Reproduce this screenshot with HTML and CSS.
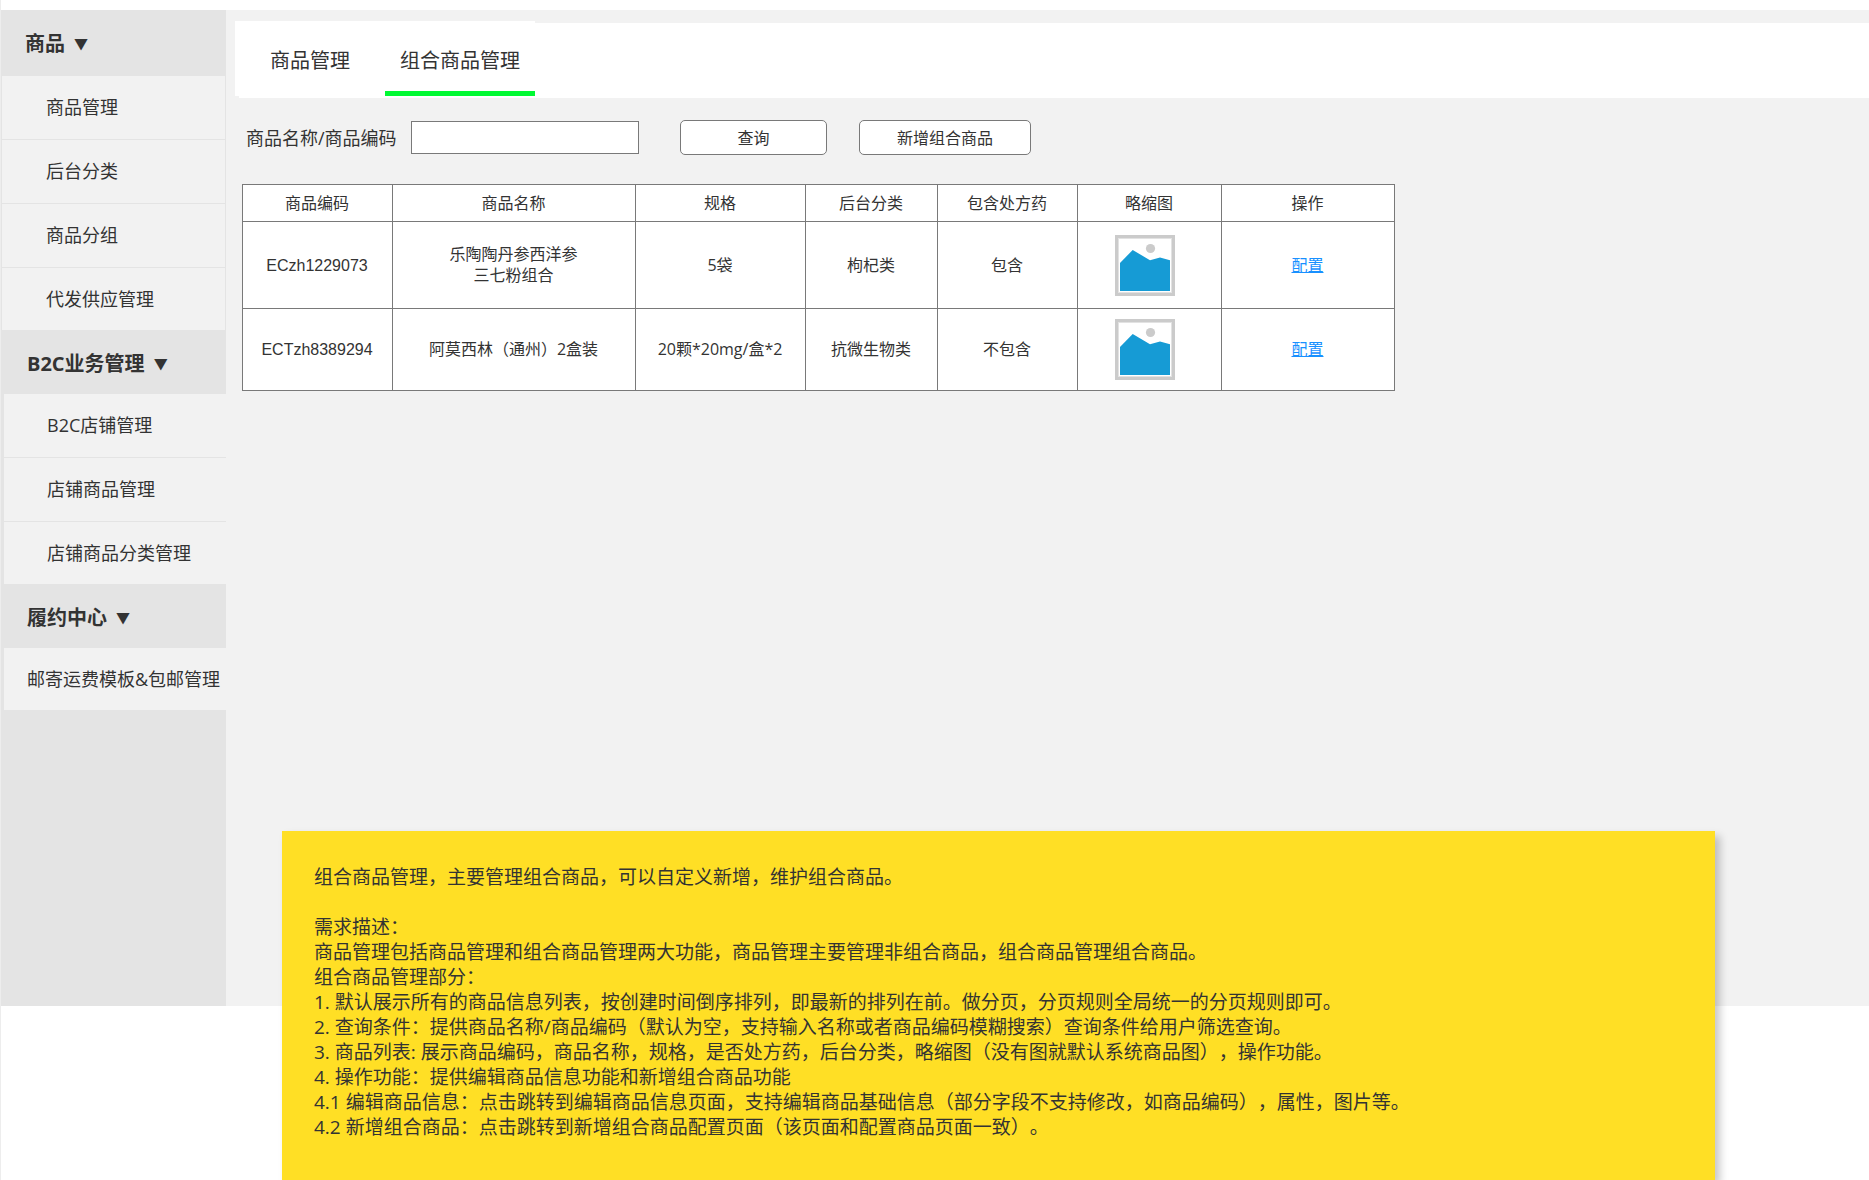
FILE: index.html
```html
<!DOCTYPE html>
<html lang="zh-CN">
<head>
<meta charset="utf-8">
<title>组合商品管理</title>
<link rel="stylesheet" href="styles.css">
</head>
<body>
<svg class="defs" width="0" height="0" aria-hidden="true">
  <symbol id="thumb" viewBox="0 0 60 61">
    <rect width="60" height="61" fill="#cbcbcb"/>
    <rect x="3" y="3" width="54" height="55" fill="#e2e2e2"/>
    <rect x="4" y="4" width="52" height="53" fill="#fff"/>
    <circle cx="35.5" cy="13.5" r="4.6" fill="#cbcbcb"/>
    <path d="M5 28L17.7 15L35 25.2L45 22.6L55 25.2V56H5Z" fill="#169bd5"/>
  </symbol>
</svg>
<div class="page">
  <div class="workspace">
    <nav class="sidebar" aria-label="主菜单">
      <section class="group group-first">
        <h2 class="group-title">商品 <span class="caret">▼</span></h2>
        <a class="item" href="#">商品管理</a>
        <a class="item" href="#">后台分类</a>
        <a class="item" href="#">商品分组</a>
        <a class="item" href="#">代发供应管理</a>
      </section>
      <section class="group">
        <h2 class="group-title">B2C业务管理 <span class="caret">▼</span></h2>
        <a class="item" href="#">B2C店铺管理</a>
        <a class="item" href="#">店铺商品管理</a>
        <a class="item" href="#">店铺商品分类管理</a>
      </section>
      <section class="group group-flush">
        <h2 class="group-title">履约中心 <span class="caret">▼</span></h2>
        <a class="item" href="#">邮寄运费模板&amp;包邮管理</a>
      </section>
    </nav>
    <main class="content">
      <header class="tabbar">
        <nav class="tabs" aria-label="商品">
          <a class="tab" href="#">商品管理</a>
          <a class="tab tab-active" href="#" aria-current="page">组合商品管理</a>
        </nav>
      </header>
      <form class="search">
        <label class="search-label" for="keyword">商品名称/商品编码</label>
        <input class="search-input" id="keyword" type="text">
        <button class="button" type="button">查询</button>
        <button class="button button-wide" type="button">新增组合商品</button>
      </form>
      <table class="goods">
        <colgroup>
          <col class="col-code"><col class="col-name"><col class="col-spec"><col class="col-category"><col class="col-rx"><col class="col-thumb"><col class="col-action">
        </colgroup>
        <thead>
          <tr><th>商品编码</th><th>商品名称</th><th>规格</th><th>后台分类</th><th>包含处方药</th><th>略缩图</th><th>操作</th></tr>
        </thead>
        <tbody>
          <tr class="row-tall">
            <td class="code">ECzh1229073</td>
            <td>乐陶陶丹参西洋参<br>三七粉组合</td>
            <td>5袋</td><td>枸杞类</td><td>包含</td>
            <td class="thumb-cell"><svg class="thumb" role="img" aria-label="商品图"><use href="#thumb"/></svg></td>
            <td><a class="link" href="#">配置</a></td>
          </tr>
          <tr>
            <td class="code">ECTzh8389294</td>
            <td>阿莫西林（通州）2盒装</td>
            <td>20颗*20mg/盒*2</td><td>抗微生物类</td><td>不包含</td>
            <td class="thumb-cell"><svg class="thumb" role="img" aria-label="商品图"><use href="#thumb"/></svg></td>
            <td><a class="link" href="#">配置</a></td>
          </tr>
        </tbody>
      </table>
    </main>
  </div>
  <aside class="note">
    <p>组合商品管理，主要管理组合商品，可以自定义新增，维护组合商品。</p>
    <p class="note-section">需求描述：</p>
    <p>商品管理包括商品管理和组合商品管理两大功能，商品管理主要管理非组合商品，组合商品管理组合商品。</p>
    <p>组合商品管理部分：</p>
    <p>1. 默认展示所有的商品信息列表，按创建时间倒序排列，即最新的排列在前。做分页，分页规则全局统一的分页规则即可。</p>
    <p>2. 查询条件：提供商品名称/商品编码（默认为空，支持输入名称或者商品编码模糊搜索）查询条件给用户筛选查询。</p>
    <p>3. 商品列表: 展示商品编码，商品名称，规格，是否处方药，后台分类，略缩图（没有图就默认系统商品图），操作功能。</p>
    <p>4. 操作功能：提供编辑商品信息功能和新增组合商品功能</p>
    <p>4.1 编辑商品信息：点击跳转到编辑商品信息页面，支持编辑商品基础信息（部分字段不支持修改，如商品编码），属性，图片等。</p>
    <p>4.2 新增组合商品：点击跳转到新增组合商品配置页面（该页面和配置商品页面一致）。</p>
  </aside>
</div>
</body>
</html>
```
FILE: styles.css
```css
* { box-sizing: border-box; }

body {
  margin: 0;
  background: #fff;
  color: #333;
  font-family: "Open Sans", "Noto Sans CJK SC", sans-serif;
  font-size: 16px;
  text-spacing-trim: space-all;
}

h2, p { margin: 0; }
a { color: inherit; text-decoration: none; }
.defs { display: block; }

.page {
  display: flex;
  flex-direction: column;
  min-height: 100vh;
  padding-top: 10px;
  border-left: 1px solid #ededed;
  overflow: hidden;
}

.workspace {
  display: flex;
  min-height: calc(100vh - 184px);
  background: #f2f2f2;
}

/* Sidebar */
.sidebar {
  flex: 0 0 225px;
  background: #e4e4e4;
}

.group { padding-left: 3px; }
.group-first { padding: 0 1px; }

.group-title {
  display: flex;
  gap: 9px;
  height: 64px;
  padding: 4px 0 0 23px;
  font-size: 20px;
  line-height: 60px;
  font-weight: 700;
}
.group-first .group-title { height: 66px; }

.caret { font-size: 14px; }

.item {
  display: block;
  height: 63px;
  padding-left: 43px;
  background: #f2f2f2;
  font-size: 18px;
  line-height: 63px;
  white-space: nowrap;
}
.group-first .item { padding-left: 44px; }
.group-flush .item { height: 62px; padding-left: 23px; }
.item + .item { border-top: 1px solid #e4e4e4; height: 64px; }
.item + .item:last-child { height: 63px; }

/* Content */
.content { flex: 1; min-width: 0; }

.tabbar {
  display: flex;
  height: 75px;
  margin: 13px 0 0 13px;
  background: #fff;
}

.tabs {
  display: flex;
  height: 75px;
  margin: -2px 0 0 -4px;
  background: #fff;
}

.tab {
  width: 150px;
  padding-top: 25px;
  border-bottom: 5px solid transparent;
  font-size: 20px;
  line-height: 30px;
  text-align: center;
}
.tab-active { border-bottom-color: #00f932; }

.search {
  display: flex;
  align-items: center;
  margin: 22px 0 29px 20px;
}

.search-label {
  width: 165px;
  font-size: 18px;
  line-height: 24px;
  white-space: nowrap;
}

.search-input {
  width: 228px;
  height: 33px;
  margin-right: 41px;
  padding: 2px 6px;
  border: 1px solid #797979;
  background: #fff;
  font: inherit;
}

.button {
  width: 147px;
  height: 35px;
  margin-right: 32px;
  padding: 0;
  border: 1px solid #797979;
  border-radius: 5px;
  background: #fff;
  color: inherit;
  font: inherit;
  line-height: 32px;
}
.button-wide { width: 172px; }

.goods {
  width: 1153px;
  margin-left: 16px;
  border-collapse: collapse;
  table-layout: fixed;
  background: #fff;
  line-height: 21px;
  text-align: center;
}
.goods th, .goods td {
  padding: 0 1px 0 0;
  border: 1px solid #797979;
  font-weight: 400;
}
.goods th { height: 37px; }
.goods td { height: 82px; }
.goods .row-tall td { height: 87px; }
.goods .code { font-family: "Liberation Sans", sans-serif; }
.goods .thumb-cell { padding-right: 9px; }

.col-code { width: 150px; }
.col-name { width: 243px; }
.col-spec { width: 170px; }
.col-category { width: 132px; }
.col-rx { width: 140px; }
.col-thumb { width: 144px; }
.col-action { width: 173px; }

.thumb {
  display: block;
  width: 60px;
  height: 61px;
  margin: 0 auto;
}

.link { color: #1890ff; text-decoration: underline; }

/* Requirement note laid over the lower edge of the workspace */
.note {
  position: relative;
  flex: 1;
  margin: -175px 154px 0 281px;
  padding: 34px 32px 40px;
  background: #ffdf25;
  box-shadow: 5px 5px 8px rgba(0, 0, 0, 0.22);
  font-size: 19px;
  line-height: 25px;
}
.note-section { margin-top: 25px; }
```
